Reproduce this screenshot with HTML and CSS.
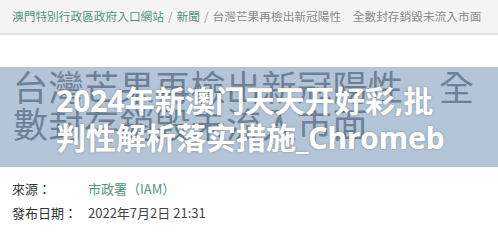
FILE: index.html
```html
<!DOCTYPE html>
<html lang="zh-Hant">
<head>
    <meta charset="UTF-8">
    <title>台灣芒果再檢出新冠陽性</title>
    <link rel="stylesheet" href="styles.css">
</head>
<body>
    <nav class="crumbs">
        <a href="#">澳門特別行政區政府入口網站</a>
        <span class="sep">/</span>
        <a href="#">新聞</a>
        <span class="sep">/</span>
        <span class="current">台灣芒果再檢出新冠陽性　全數封存銷毀未流入市面</span>
    </nav>

    <section class="banner">
        <h1 class="news-title">台灣芒果再檢出新冠陽性　全數封存銷毀未流入市面</h1>
        <div class="overlay">
            <p class="overlay-text">2024年新澳门天天开好彩,批判性解析落实措施_Chromebook</p>
        </div>
    </section>

    <dl class="meta">
        <div class="meta-row">
            <dt>來源：</dt>
            <dd><a href="#">市政署（IAM）</a></dd>
        </div>
        <div class="meta-row">
            <dt>發布日期：</dt>
            <dd>2022年7月2日 21:31</dd>
        </div>
    </dl>
</body>
</html>
```

FILE: styles.css
```css
* {
    margin: 0;
    padding: 0;
    box-sizing: border-box;
}

body {
    font-family: "Noto Sans", "Noto Sans CJK TC", sans-serif;
    background-color: #fff;
    color: #333;
    width: 498px;
    height: 236px;
    overflow: hidden;
}

a {
    text-decoration: none;
}

/* breadcrumb bar */
.crumbs {
    display: flex;
    align-items: center;
    gap: 4px;
    height: 35px;
    padding: 0 12px 2px;
    background-color: #f4f4f4;
    border-bottom: 2px solid #e2e2e2;
    font-family: "Noto Sans CJK TC", sans-serif;
    font-size: 11.7px;
    white-space: nowrap;
    overflow: hidden;
}

.crumbs a {
    color: #4f9480;
}

.crumbs .sep {
    color: #999;
}

.crumbs .current {
    color: #8a8a8a;
}

/* blue band with the headline */
.banner {
    position: relative;
    margin-top: 32px;
    height: 100px;
    background-color: #b3c5d7;
    overflow: hidden;
}

.news-title {
    padding: 0 0 0 13px;
    font-family: "Noto Sans CJK TC", sans-serif;
    font-weight: 400;
    font-size: 35px;
    line-height: 37px;
    letter-spacing: 0.5px;
    color: #6e8194;
}

.overlay {
    position: absolute;
    top: 15px;
    left: 56px;
    width: 400px;
}

.overlay-text {
    font-family: "Noto Sans", "Noto Sans CJK SC", sans-serif;
    font-weight: 700;
    font-size: 30px;
    line-height: 37px;
    max-height: 74px;
    color: #fff;
    word-break: break-all;
    text-shadow: 0 0 3px rgba(60, 70, 80, 0.35);
    overflow: hidden;
}

/* source and date */
.meta {
    padding: 9px 12px 0;
    font-family: "Noto Sans CJK TC", sans-serif;
    font-size: 13px;
}

.meta-row {
    display: flex;
    height: 24px;
    align-items: center;
}

.meta dt {
    width: 76px;
    color: #333;
}

.meta dd {
    color: #444;
}

.meta dd a {
    color: #4f9480;
}
```
